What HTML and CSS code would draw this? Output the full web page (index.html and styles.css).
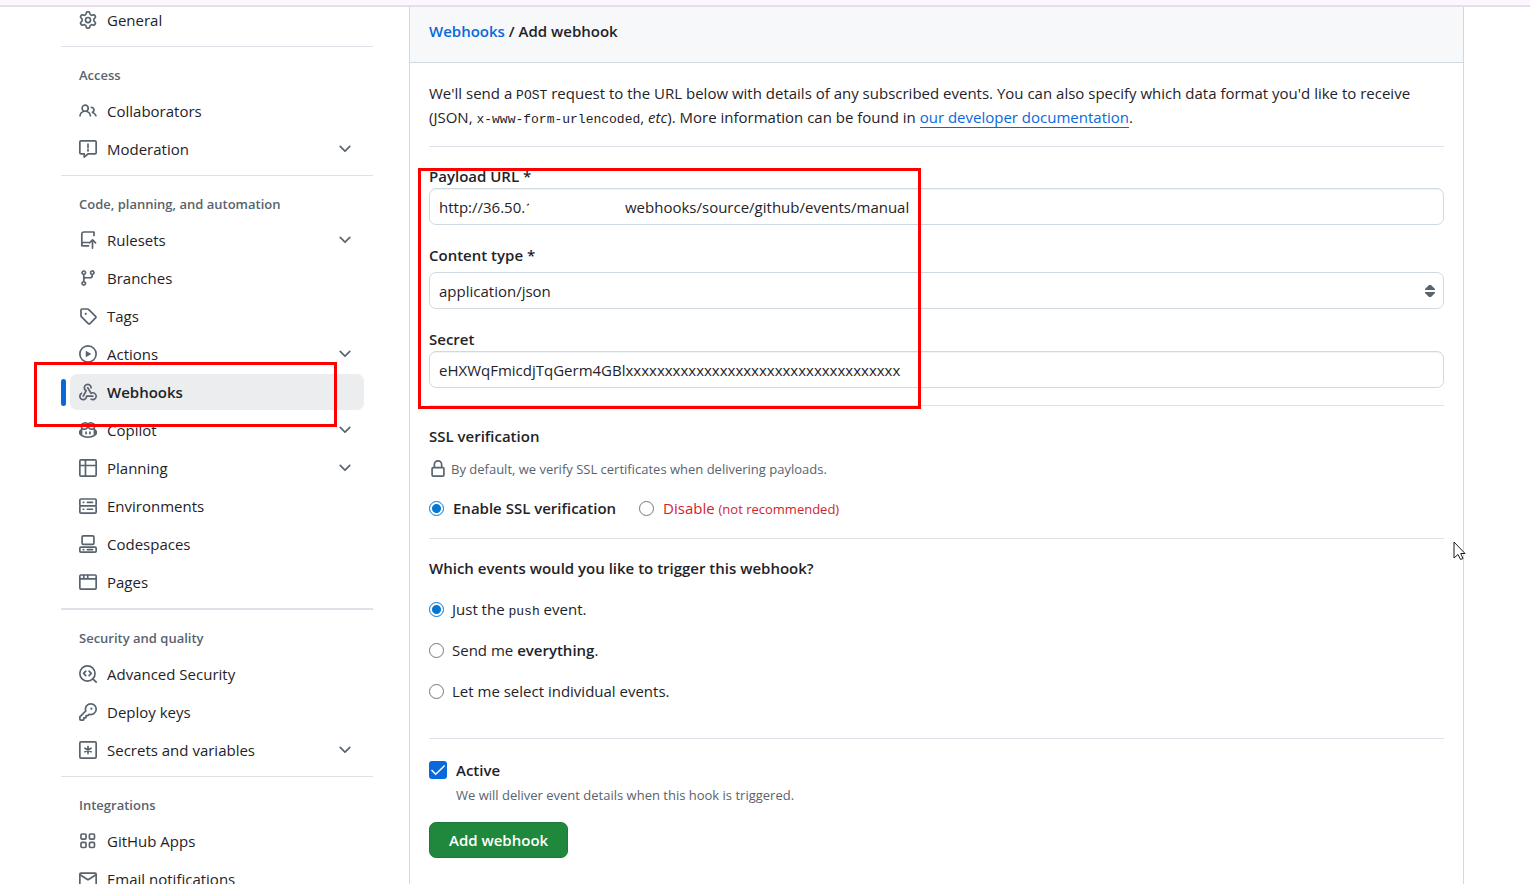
FILE: index.html
```html
<!DOCTYPE html>
<html lang="en">
<head>
  <meta charset="UTF-8" />
  <meta name="viewport" content="width=device-width, initial-scale=1.0" />
  <title>Add webhook</title>
  <link rel="stylesheet" href="styles.css">
</head>
<body>
  <svg class="sprite" aria-hidden="true">
    <symbol id="chevron" viewBox="0 0 16 16"><path d="M12.78 5.22a.749.749 0 0 1 0 1.06l-4.25 4.25a.749.749 0 0 1-1.06 0L3.22 6.28a.749.749 0 1 1 1.06-1.06L8 8.939l3.72-3.719a.749.749 0 0 1 1.06 0Z"/></symbol>
  </svg>

  <div class="topbar"></div>
  <div class="layout">
    <nav class="sidebar" aria-label="Settings">
      <ul>
        <li><a href="#general">
          <svg class="icon" viewBox="0 0 16 16"><path d="M8 0a8.2 8.2 0 0 1 .701.031C9.444.095 9.99.645 10.16 1.29l.288 1.107c.018.066.079.158.212.224.231.114.454.243.668.386.123.082.233.09.299.071l1.103-.303c.644-.176 1.392.021 1.82.63.27.385.506.792.704 1.218.315.675.111 1.422-.364 1.891l-.814.806c-.049.048-.098.147-.088.294.016.257.016.515 0 .772-.01.147.038.246.088.294l.814.806c.475.469.679 1.216.364 1.891a7.977 7.977 0 0 1-.704 1.217c-.428.61-1.176.807-1.82.63l-1.102-.302c-.067-.019-.177-.011-.3.071a5.909 5.909 0 0 1-.668.386c-.133.066-.194.158-.211.224l-.29 1.106c-.168.646-.715 1.196-1.458 1.26a8.006 8.006 0 0 1-1.402 0c-.743-.064-1.289-.614-1.458-1.26l-.289-1.106c-.018-.066-.079-.158-.212-.224a5.738 5.738 0 0 1-.668-.386c-.123-.082-.233-.09-.299-.071l-1.103.303c-.644.176-1.392-.021-1.82-.63a8.12 8.12 0 0 1-.704-1.218c-.315-.675-.111-1.422.363-1.891l.815-.806c.05-.048.098-.147.088-.294a6.214 6.214 0 0 1 0-.772c.01-.147-.038-.246-.088-.294l-.815-.806C.635 6.045.431 5.298.746 4.623a7.92 7.92 0 0 1 .704-1.217c.428-.61 1.176-.807 1.82-.63l1.102.302c.067.019.177.011.3-.071.214-.143.437-.272.668-.386.133-.066.194-.158.211-.224l.29-1.106C6.009.645 6.556.095 7.299.03 7.53.01 7.764 0 8 0Zm-.571 1.525c-.036.003-.108.036-.137.146l-.289 1.105c-.147.561-.549.967-.998 1.189-.173.086-.34.183-.5.29-.417.278-.97.423-1.529.27l-1.103-.303c-.109-.03-.175.016-.195.045-.22.312-.412.644-.573.99-.014.031-.021.11.059.19l.815.806c.411.406.562.957.53 1.456a4.709 4.709 0 0 0 0 .582c.032.499-.119 1.05-.53 1.456l-.815.806c-.081.08-.073.159-.059.19.162.346.353.677.573.989.02.03.085.076.195.046l1.102-.303c.56-.153 1.113-.008 1.53.27.161.107.328.204.501.29.447.222.85.629.997 1.189l.289 1.105c.029.109.101.143.137.146a6.6 6.6 0 0 0 1.142 0c.036-.003.108-.036.137-.146l.289-1.105c.147-.561.549-.967.998-1.189.173-.086.34-.183.5-.29.417-.278.97-.423 1.529-.27l1.103.303c.109.029.175-.016.195-.045.22-.313.411-.644.573-.99.014-.031.021-.11-.059-.19l-.815-.806c-.411-.406-.562-.957-.53-1.456a4.709 4.709 0 0 0 0-.582c-.032-.499.119-1.05.53-1.456l.815-.806c.081-.08.073-.159.059-.19a6.464 6.464 0 0 0-.573-.989c-.02-.03-.085-.076-.195-.046l-1.102.303c-.56.153-1.113.008-1.53-.27a4.44 4.44 0 0 0-.501-.29c-.447-.222-.85-.629-.997-1.189l-.289-1.105c-.029-.11-.101-.143-.137-.146a6.6 6.6 0 0 0-1.142 0ZM11 8a3 3 0 1 1-6 0 3 3 0 0 1 6 0ZM9.5 8a1.5 1.5 0 1 0-3.001.001A1.5 1.5 0 0 0 9.5 8Z"/></svg>
          General</a></li>
      </ul>

      <h2>Access</h2>
      <ul>
        <li><a href="#collaborators">
          <svg class="icon" viewBox="0 0 16 16"><path d="M2 5.5a3.5 3.5 0 1 1 5.898 2.549 5.508 5.508 0 0 1 3.034 4.084.75.75 0 1 1-1.482.235 4 4 0 0 0-7.9 0 .75.75 0 0 1-1.482-.236A5.507 5.507 0 0 1 3.102 8.05 3.493 3.493 0 0 1 2 5.5ZM11 4a3.001 3.001 0 0 1 2.22 5.018 5.01 5.01 0 0 1 2.56 3.012.749.749 0 0 1-.885.954.752.752 0 0 1-.549-.514 3.507 3.507 0 0 0-2.522-2.372.75.75 0 0 1-.574-.73v-.352a.75.75 0 0 1 .416-.672A1.5 1.5 0 0 0 11 5.5.75.75 0 0 1 11 4Zm-5.5-.5a2 2 0 1 0-.001 3.999A2 2 0 0 0 5.5 3.5Z"/></svg>
          Collaborators</a></li>
        <li><a href="#moderation">
          <svg class="icon line" viewBox="0 0 16 16"><path d="M1.75.75h12.5a1 1 0 0 1 1 1v9.5a1 1 0 0 1-1 1H8.2l-3.6 2.9v-2.9H1.75a1 1 0 0 1-1-1v-9.5a1 1 0 0 1 1-1ZM8 3.6v3M8 8.3v1.4"/></svg>
          Moderation <svg class="chevron"><use href="#chevron"/></svg></a></li>
      </ul>

      <h2>Code, planning, and automation</h2>
      <ul>
        <li><a href="#rulesets">
          <svg class="icon line" viewBox="0 0 16 16"><path d="M13.3 4V.9H4.2a1.7 1.7 0 0 0-1.7 1.7v10.6M5.8 10.2H4a1.5 1.5 0 0 0 0 3h4.5M5.8 10.2h2.6M12 15.2V8M9.3 10.5 12 7.8l2.7 2.7"/></svg>
          Rulesets <svg class="chevron"><use href="#chevron"/></svg></a></li>
        <li><a href="#branches">
          <svg class="icon" viewBox="0 0 16 16"><path d="M9.5 3.25a2.25 2.25 0 1 1 3 2.122V6A2.5 2.5 0 0 1 10 8.5H6a1 1 0 0 0-1 1v1.128a2.251 2.251 0 1 1-1.5 0V5.372a2.25 2.25 0 1 1 1.5 0v1.836A2.493 2.493 0 0 1 6 7h4a1 1 0 0 0 1-1v-.628A2.25 2.25 0 0 1 9.5 3.25Zm-6 0a.75.75 0 1 0 1.5 0 .75.75 0 0 0-1.5 0Zm8.25-.75a.75.75 0 1 0 0 1.5.75.75 0 0 0 0-1.5ZM4.25 12a.75.75 0 1 0 0 1.5.75.75 0 0 0 0-1.5Z"/></svg>
          Branches</a></li>
        <li><a href="#tags">
          <svg class="icon" viewBox="0 0 16 16"><path d="M1 7.775V2.75C1 1.784 1.784 1 2.75 1h5.025c.464 0 .91.184 1.238.513l6.25 6.25a1.75 1.75 0 0 1 0 2.474l-5.026 5.026a1.75 1.75 0 0 1-2.474 0l-6.25-6.25A1.752 1.752 0 0 1 1 7.775Zm1.5 0c0 .066.026.13.073.177l6.25 6.25a.25.25 0 0 0 .354 0l5.025-5.025a.25.25 0 0 0 0-.354l-6.25-6.25a.25.25 0 0 0-.177-.073H2.75a.25.25 0 0 0-.25.25ZM6 5a1 1 0 1 1 0 2 1 1 0 0 1 0-2Z"/></svg>
          Tags</a></li>
        <li><a href="#actions">
          <svg class="icon" viewBox="0 0 16 16"><path d="M8 0a8 8 0 1 1 0 16A8 8 0 0 1 8 0ZM1.5 8a6.5 6.5 0 1 0 13 0 6.5 6.5 0 0 0-13 0Zm4.879-2.773 4.264 2.559a.25.25 0 0 1 0 .428l-4.264 2.559A.25.25 0 0 1 6 10.559V5.442a.25.25 0 0 1 .379-.215Z"/></svg>
          Actions <svg class="chevron"><use href="#chevron"/></svg></a></li>
        <li class="active"><a href="#webhooks" aria-current="page">
          <svg class="icon" viewBox="0 0 16 16"><path d="M5.5 4.25a2.25 2.25 0 0 1 4.5 0 .75.75 0 0 0 1.5 0 3.75 3.75 0 1 0-6.14 2.889l-2.272 4.258a.75.75 0 0 0 1.324.706L7 7.25a.75.75 0 0 0-.309-1.015A2.25 2.25 0 0 1 5.5 4.25Z"/><path d="M7.364 3.607a.75.75 0 0 1 1.03.257l2.608 4.349a3.75 3.75 0 1 1-.628 6.785.75.75 0 0 1 .752-1.299 2.25 2.25 0 1 0-.033-3.88.75.75 0 0 1-1.03-.256L7.107 4.636a.75.75 0 0 1 .257-1.03Z"/><path d="M2.9 8.776A.75.75 0 0 1 2.625 9.8 2.25 2.25 0 1 0 6 11.75a.75.75 0 0 1 .75-.751h5.5a.75.75 0 0 1 0 1.5H7.425a3.751 3.751 0 1 1-5.55-3.998.75.75 0 0 1 1.024.274Z"/></svg>
          Webhooks</a><span class="highlight nav-highlight"></span></li>
        <li><a href="#copilot">
          <svg class="icon" viewBox="0 0 16 16"><path d="M7.998 15.035c-4.562 0-7.873-2.914-7.998-3.749V9.338c.085-.628.677-1.686 1.588-2.065.013-.07.024-.143.036-.218.029-.183.06-.384.126-.612-.201-.508-.254-1.084-.254-1.656 0-.87.128-1.769.693-2.484.579-.733 1.494-1.124 2.724-1.261 1.206-.134 2.262.034 2.944.765.05.053.096.108.139.165.044-.057.094-.112.143-.165.682-.731 1.738-.899 2.944-.765 1.23.137 2.145.528 2.724 1.261.566.715.693 1.614.693 2.484 0 .572-.053 1.148-.254 1.656.066.228.098.429.126.612.012.076.024.148.037.218.924.385 1.522 1.471 1.591 2.095v1.872c0 .766-3.351 3.795-8.002 3.795Zm0-1.485c2.28 0 4.584-1.11 5.002-1.433V7.862l-.023-.116c-.49.21-1.075.291-1.727.291-1.146 0-2.059-.327-2.71-.991A3.222 3.222 0 0 1 8 6.303a3.24 3.24 0 0 1-.544.743c-.65.664-1.563.991-2.71.991-.652 0-1.236-.081-1.727-.291l-.023.116v4.255c.419.323 2.722 1.433 5.002 1.433ZM6.762 2.83c-.193-.206-.637-.413-1.682-.297-1.019.113-1.479.404-1.713.7-.247.312-.369.789-.369 1.554 0 .793.129 1.171.308 1.371.162.181.519.379 1.442.379.853 0 1.339-.235 1.638-.54.315-.322.527-.827.617-1.553.117-.935-.037-1.395-.241-1.614Zm4.155-.297c-1.044-.116-1.488.091-1.681.297-.204.219-.359.679-.242 1.614.091.726.303 1.231.618 1.553.299.305.784.54 1.638.54.922 0 1.28-.198 1.442-.379.179-.2.308-.578.308-1.371 0-.765-.123-1.242-.37-1.554-.233-.296-.693-.587-1.713-.7Z"/><path d="M6.25 9.037a.75.75 0 0 1 .75.75v1.501a.75.75 0 0 1-1.5 0V9.787a.75.75 0 0 1 .75-.75Zm4.25.75v1.501a.75.75 0 0 1-1.5 0V9.787a.75.75 0 0 1 1.5 0Z"/></svg>
          Copilot <svg class="chevron"><use href="#chevron"/></svg></a></li>
        <li><a href="#planning">
          <svg class="icon line" viewBox="0 0 16 16"><rect x=".75" y=".75" width="14.5" height="14.5" rx="1"/><path d="M.75 5.75h14.5M5.75.75v14.5"/></svg>
          Planning <svg class="chevron"><use href="#chevron"/></svg></a></li>
        <li><a href="#environments">
          <svg class="icon line" viewBox="0 0 16 16"><rect x=".75" y="1.75" width="14.5" height="6" rx="1"/><rect x=".75" y="7.75" width="14.5" height="6.5" rx="1"/><path d="M3.8 4.75h.4M7.500 4.75h4.500M3.8 10.9h.4M7.500 10.9h4.500"/></svg>
          Environments</a></li>
        <li><a href="#codespaces">
          <svg class="icon line" viewBox="0 0 16 16"><rect x="2.75" y=".75" width="10.5" height="7.5" rx="1"/><rect x=".75" y="10.75" width="14.5" height="4.5" rx="1"/><path d="M3.8 13h.4M7.500 13h4.500"/></svg>
          Codespaces</a></li>
        <li><a href="#pages">
          <svg class="icon line" viewBox="0 0 16 16"><rect x=".75" y="1.75" width="14.5" height="12.5" rx="1"/><path d="M.75 5.25h14.5M4.25 2v3M7.75 2v3"/></svg>
          Pages</a></li>
      </ul>

      <h2 class="strong-divider">Security and quality</h2>
      <ul>
        <li><a href="#security">
          <svg class="icon line" viewBox="0 0 16 16"><circle cx="7.5" cy="7.5" r="6.75"/><path d="m12.3 12.3 3 3M6 5.500 4.100 7.500 6 9.500M9 5.500l1.900 2L9 9.500"/></svg>
          Advanced Security</a></li>
        <li><a href="#keys">
          <svg class="icon" viewBox="0 0 16 16"><path d="M10.5 0a5.499 5.499 0 1 1-1.288 10.848l-.932.932a.749.749 0 0 1-.53.22H7v.75a.749.749 0 0 1-.22.53l-.5.5a.749.749 0 0 1-.53.22H5v.75a.749.749 0 0 1-.22.53l-.5.5a.749.749 0 0 1-.53.22h-2A1.75 1.75 0 0 1 0 14.25v-2c0-.199.079-.389.22-.53l4.932-4.932A5.5 5.5 0 0 1 10.5 0Zm-4 5.5c-.001.431.069.86.205 1.269a.75.75 0 0 1-.181.768L1.5 12.56v1.69c0 .138.112.25.25.25h1.69l.06-.06v-1.19a.75.75 0 0 1 .75-.75h1.19l.06-.06v-1.19a.75.75 0 0 1 .75-.75h1.19l1.023-1.025a.75.75 0 0 1 .768-.18A4 4 0 1 0 6.5 5.5ZM11 6a1 1 0 1 1 0-2 1 1 0 0 1 0 2Z"/></svg>
          Deploy keys</a></li>
        <li><a href="#secrets">
          <svg class="icon line" viewBox="0 0 16 16"><rect x=".75" y=".75" width="14.5" height="14.5" rx="1"/><path d="M8 4.8v6.4M5.300 6.400l5.400 3.200M10.700 6.400 5.300 9.600"/></svg>
          Secrets and variables <svg class="chevron"><use href="#chevron"/></svg></a></li>
      </ul>

      <h2>Integrations</h2>
      <ul>
        <li><a href="#apps">
          <svg class="icon line" viewBox="0 0 16 16"><rect x="1.75" y="1.75" width="4.5" height="4.5" rx="1"/><rect x="9.25" y="1.75" width="4.5" height="4.5" rx="1"/><rect x="1.75" y="9.25" width="4.5" height="4.5" rx="1"/><rect x="9.25" y="9.25" width="4.5" height="4.5" rx="1"/></svg>
          GitHub Apps</a></li>
        <li><a href="#email">
          <svg class="icon line" viewBox="0 0 16 16"><rect x=".75" y="2.75" width="14.5" height="10.5" rx="1"/><path d="m1 4.2 6.5 4.2a1 1 0 0 0 1 0L15 4.2"/></svg>
          Email notifications</a></li>
      </ul>
    </nav>

    <main class="panel">
      <h1 class="panel-header"><a href="#webhooks">Webhooks</a> / Add webhook</h1>
      <form class="panel-body">
        <p class="intro">We'll send a <code>POST</code> request to the URL below with details of any subscribed events. You can also specify which data format you'd like to receive (JSON, <code>x-www-form-urlencoded</code>, <em>etc</em>). More information can be found in <a href="#docs">our developer documentation</a>.</p>

        <section class="fields">
          <div class="field">
            <label for="payloadUrl">Payload URL *</label>
            <div class="masked">
              <input type="text" id="payloadUrl" value="http://36.50.1                      /webhooks/source/github/events/manual" />
              <span class="mask"></span>
            </div>
          </div>
          <div class="field">
            <label for="contentType">Content type *</label>
            <select id="contentType">
              <option>application/json</option>
              <option>application/x-www-form-urlencoded</option>
            </select>
          </div>
          <div class="field">
            <label for="secret">Secret</label>
            <input type="text" id="secret" value="eHXWqFmicdjTqGerm4GBlxxxxxxxxxxxxxxxxxxxxxxxxxxxxxxxxxxx" />
          </div>
          <span class="highlight form-highlight"></span>
        </section>

        <section class="ssl">
          <h3>SSL verification</h3>
          <p class="note">
            <svg class="icon" viewBox="0 0 16 16"><path d="M4 4a4 4 0 0 1 8 0v2h.25c.966 0 1.75.784 1.75 1.75v5.5A1.75 1.75 0 0 1 12.25 15h-8.5A1.75 1.75 0 0 1 2 13.25v-5.5C2 6.784 2.784 6 3.75 6H4Zm8.25 3.5h-8.5a.25.25 0 0 0-.25.25v5.5c0 .138.112.25.25.25h8.5a.25.25 0 0 0 .25-.25v-5.5a.25.25 0 0 0-.25-.25ZM10.5 6V4a2.5 2.5 0 1 0-5 0v2Z"/></svg>
            By default, we verify SSL certificates when delivering payloads.
          </p>
          <div class="ssl-options">
            <label><input type="radio" name="ssl" checked /> <strong>Enable SSL verification</strong></label>
            <label class="danger"><input type="radio" name="ssl" /> <span>Disable <small>(not recommended)</small></span></label>
          </div>
        </section>

        <section class="events">
          <h3>Which events would you like to trigger this webhook?</h3>
          <label><input type="radio" name="events" checked /> <span>Just the <code>push</code> event.</span></label>
          <label><input type="radio" name="events" /> <span>Send me <strong>everything</strong>.</span></label>
          <label><input type="radio" name="events" /> <span>Let me select individual events.</span></label>
        </section>

        <section class="submit">
          <label class="active-label"><input type="checkbox" checked /> <strong>Active</strong></label>
          <p class="active-note">We will deliver event details when this hook is triggered.</p>
          <button type="submit">Add webhook</button>
        </section>
      </form>
    </main>
  </div>

  <svg class="cursor" viewBox="0 0 13 20" aria-hidden="true"><path d="M1 1v16l4-3.500 2.500 5 2.500-1-2.300-5H12Z"/></svg>
</body>
</html>
```

FILE: styles.css
```css
* {
  box-sizing: border-box;
}

body {
  position: relative;
  margin: 0;
  height: 100vh;
  overflow: hidden;
  background-color: #fff;
  color: #1f2328;
  font-family: 'Open Sans', 'Noto Sans', sans-serif;
  font-size: 15px;
  line-height: 24px;
}

h1, h2, h3, p, ul {
  margin: 0;
  padding: 0;
  font-size: 15px;
}

h1, h3, strong {
  font-weight: 600;
}

ul {
  list-style: none;
}

a {
  color: #0969da;
  text-decoration: none;
}

code {
  font-family: 'Liberation Mono', monospace;
  font-size: 13px;
  line-height: 1;
}

small {
  font-size: 13px;
  line-height: 1;
}

.sprite {
  display: none;
}

.topbar {
  position: relative;
  z-index: 1;
  height: 7px;
  background-color: #fcf6ff;
  border-bottom: 2px solid #e6dfea;
}

.layout {
  display: flex;
  gap: 36px;
  padding: 0 66px 0 61px;
}

/* sidebar */

.sidebar {
  flex: 0 0 312px;
  margin-top: -5px;
}

.sidebar ul {
  display: flex;
  flex-direction: column;
  gap: 2px;
  padding: 0 9px 8px;
}

.sidebar li {
  position: relative;
}

.sidebar li a {
  display: flex;
  align-items: center;
  gap: 10px;
  height: 36px;
  padding: 0 10px 0 9px;
  border-radius: 7px;
  color: #1f2328;
}

.sidebar h2 {
  padding: 16px 18px 6px;
  border-top: 1px solid #dce2e8;
  color: #59636e;
  font-size: 13px;
  font-weight: 600;
}

.sidebar .strong-divider {
  border-top-width: 2px;
}

.sidebar .active a {
  background-color: #ecedef;
  font-weight: 600;
}

.sidebar .active::before {
  content: '';
  position: absolute;
  top: 5px;
  left: -9px;
  width: 5px;
  height: 27px;
  border-radius: 3px;
  background-color: #0969da;
}

.icon, .chevron {
  flex: none;
  width: 18px;
  height: 18px;
  fill: #59636e;
}

.chevron {
  margin-left: auto;
}

.line {
  fill: none;
  stroke: #59636e;
  stroke-width: 1.5;
  stroke-linecap: round;
  stroke-linejoin: round;
}

.highlight {
  position: absolute;
  z-index: 2;
  border: 3px solid #f00;
  pointer-events: none;
}

.nav-highlight {
  top: -12px;
  left: -36px;
  width: 303px;
  height: 65px;
}

/* main panel */

.panel {
  flex: 1;
  min-width: 0;
  min-height: 100vh;
  border: 1px solid #d1d9e0;
  border-width: 0 1px;
}

.panel-header {
  padding: 12px 19px 19px;
  border-bottom: 1px solid #d1d9e0;
  background-color: #f6f8fa;
}

.panel-body {
  padding: 18px 19px;
}

.intro {
  padding-bottom: 17px;
}

.intro a {
  border-bottom: 1px solid #0969da;
}

section {
  border-top: 1px solid #dce2e8;
}

.fields {
  position: relative;
  padding: 17px 0;
}

.field {
  display: flex;
  flex-direction: column;
}

.field + .field {
  margin-top: 18px;
}

.field label {
  font-weight: 600;
}

input[type="text"], select {
  width: 100%;
  height: 37px;
  padding: 0 9px;
  border: 1px solid #d1d9e0;
  border-radius: 7px;
  background-color: #fff;
  box-shadow: inset 0 1px 0 #f1f3f5;
  color: #1f2328;
  font: inherit;
}

select {
  margin-top: 5px;
  appearance: none;
  box-shadow: none;
  background-image: url("data:image/svg+xml,%3Csvg xmlns='http://www.w3.org/2000/svg' width='10' height='12' fill='%2359636e'%3E%3Cpath d='M4 0h2l4 4v1H0V4zM4 12h2l4-4V7H0v1z'/%3E%3C/svg%3E");
  background-repeat: no-repeat;
  background-position: right 8px center;
}

.masked {
  position: relative;
}

.masked input {
  display: block;
}

.mask {
  position: absolute;
  top: 4px;
  left: 100px;
  width: 96px;
  height: 28px;
  background-color: #fff;
}

.form-highlight {
  top: 21px;
  left: -11px;
  width: 503px;
  height: 241px;
}

.ssl {
  padding: 18px 0 18px;
}

.note {
  display: flex;
  align-items: center;
  gap: 4px;
  padding: 9px 0 8px;
  color: #59636e;
  font-size: 13px;
}

.ssl-options {
  display: flex;
  gap: 23px;
  padding-top: 7px;
}

label {
  display: flex;
  align-items: center;
}

.ssl-options label {
  gap: 9px;
}

.danger {
  color: #d1242f;
}

input[type="radio"] {
  flex: none;
  appearance: none;
  width: 15px;
  height: 15px;
  margin: 0;
  border: 1px solid #767676;
  border-radius: 50%;
  background-color: #fff;
}

input[type="radio"]:checked {
  border-color: #0078d4;
  background: radial-gradient(circle, #0078d4 4px, #fff 5px);
}

.events {
  padding: 17px 0 35px;
}

.events label {
  gap: 8px;
  margin-top: 17px;
}

.submit {
  padding: 19px 0;
}

.active-label {
  gap: 9px;
}

input[type="checkbox"] {
  flex: none;
  appearance: none;
  width: 18px;
  height: 18px;
  margin: 0;
  border-radius: 3px;
  background: #0969da url("data:image/svg+xml,%3Csvg xmlns='http://www.w3.org/2000/svg' width='18' height='18' fill='none' stroke='white' stroke-width='1.500'%3E%3Cpath d='M2.500 9l4.200 4.200 9-8.700'/%3E%3C/svg%3E") center;
}

.active-note {
  padding: 1px 0 0 27px;
  color: #59636e;
  font-size: 13px;
}

button {
  margin-top: 15px;
  height: 36px;
  padding: 0 19px;
  border: 1px solid #1f7a39;
  border-radius: 7px;
  background-color: #1f883d;
  color: #fff;
  font: inherit;
  font-weight: 600;
  cursor: pointer;
}

.cursor {
  position: absolute;
  z-index: 3;
  top: 541px;
  right: 64px;
  width: 13px;
  height: 20px;
  fill: #fff;
  stroke: #1b1b24;
}
```
